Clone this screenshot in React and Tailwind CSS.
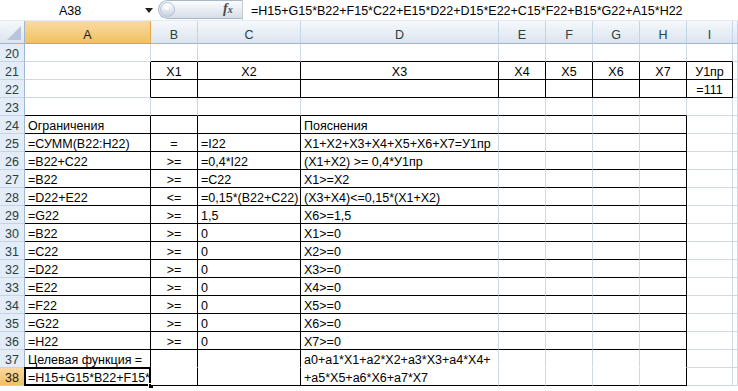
import React from "react";

const COLS = ["A", "B", "C", "D", "E", "F", "G", "H", "I", "J"];

const data = {
  21: { B: "X1", C: "X2", D: "X3", E: "X4", F: "X5", G: "X6", H: "X7", I: "У1пр" },
  22: { I: "=111" },
  24: { A: "Ограничения", D: "Пояснения" },
  25: { A: "=СУММ(B22:H22)", B: "=", C: "=I22", D: "X1+X2+X3+X4+X5+X6+X7=У1пр" },
  26: { A: "=B22+C22", B: ">=", C: "=0,4*I22", D: "(X1+X2) >= 0,4*У1пр" },
  27: { A: "=B22", B: ">=", C: "=C22", D: "X1>=X2" },
  28: { A: "=D22+E22", B: "<=", C: "=0,15*(B22+C22)", D: "(X3+X4)<=0,15*(X1+X2)" },
  29: { A: "=G22", B: ">=", C: "1,5", D: "X6>=1,5" },
  30: { A: "=B22", B: ">=", C: "0", D: "X1>=0" },
  31: { A: "=C22", B: ">=", C: "0", D: "X2>=0" },
  32: { A: "=D22", B: ">=", C: "0", D: "X3>=0" },
  33: { A: "=E22", B: ">=", C: "0", D: "X4>=0" },
  34: { A: "=F22", B: ">=", C: "0", D: "X5>=0" },
  35: { A: "=G22", B: ">=", C: "0", D: "X6>=0" },
  36: { A: "=H22", B: ">=", C: "0", D: "X7>=0" },
  37: { A: "Целевая функция =", D: "a0+a1*X1+a2*X2+a3*X3+a4*X4+" },
  38: { A: "=H15+G15*B22+F15*", D: "+a5*X5+a6*X6+a7*X7" },
};

const FORMULA = "=H15+G15*B22+F15*C22+E15*D22+D15*E22+C15*F22+B15*G22+A15*H22";

function idx(c) {
  return COLS.indexOf(c);
}

function blackRight(r, c) {
  const i = idx(c);
  if (r === 21 || r === 22) return i >= 0 && i <= 8;
  if (r >= 24 && r <= 38) return c === "A" || c === "B" || c === "C" || c === "H";
  return false;
}

function blackBottom(r, c) {
  const i = idx(c);
  if (r >= 20 && r <= 22) return i >= 1 && i <= 8;
  if (r >= 23 && r <= 36) return i >= 0 && i <= 7;
  if (r === 37) return c === "A";
  if (r === 38) return i >= 0 && i <= 7;
  return false;
}

function noBottom(r, c) {
  const i = idx(c);
  return r === 37 && i >= 1 && i <= 7;
}

function isCentered(r, c) {
  if (r === 21 || r === 22) return true;
  if (r >= 25 && c === "B") return true;
  return false;
}

function Cell({ r, c }) {
  const text = (data[r] && data[r][c]) || "";
  const br = blackRight(r, c) ? "border-r-black" : "border-r-[#d0d7e5]";
  const bb = noBottom(r, c)
    ? "border-b-white"
    : blackBottom(r, c)
    ? "border-b-black"
    : "border-b-[#d0d7e5]";
  const align = isCentered(r, c) ? "justify-center" : "justify-start pl-[3px]";
  const selected = r === 38 && c === "A";
  return (
    <div
      className={`relative h-[18px] border-r border-b ${br} ${bb} bg-white flex items-start ${align} pt-[3px] overflow-visible`}
    >
      <span className="leading-[14px] whitespace-nowrap">{text}</span>
      {selected && (
        <>
          <div className="absolute left-[-1px] top-[-1px] right-[-1px] bottom-[-1px] border-2 border-black pointer-events-none" />
          <div className="absolute right-[-4px] bottom-[-4px] w-[6px] h-[6px] bg-black border border-white pointer-events-none" />
        </>
      )}
    </div>
  );
}

function RowHeader({ r }) {
  const sel = r === 38;
  return (
    <div
      className={`h-[18px] border-r border-b border-r-[#9eb6ce] border-b-[#c5d3e6] flex justify-center items-start pt-[3px] ${
        sel ? "bg-gradient-to-b from-[#f9d99f] to-[#f1c15f] text-[#1a1a1a]" : "bg-[#e4ecf7] text-[#27413e]"
      }`}
    >
      <span className="leading-[14px]">{r}</span>
    </div>
  );
}

function ColHeader({ c }) {
  const sel = c === "A";
  return (
    <div
      className={`h-[23px] border-r border-b flex justify-center items-start pt-[7px] ${
        sel
          ? "bg-gradient-to-b from-[#f9dba3] to-[#f1c15f] border-r-[#e2a84f] border-b-[#f29536] text-[#1a1a1a]"
          : "bg-gradient-to-b from-[#f6f9fc] to-[#dbe4f0] border-r-[#c5d3e6] border-b-[#9eb6ce] text-[#27413e]"
      }`}
    >
      <span className="leading-[14px]">{c === "J" ? "" : c}</span>
    </div>
  );
}

export default function App() {
  const rows = [];
  for (let r = 20; r <= 38; r++) rows.push(r);
  return (
    <div className="w-[738px] h-[391px] overflow-hidden bg-white font-['Liberation_Sans',Arial,sans-serif] text-[12.5px] text-black">
      {/* Formula bar */}
      <div className="h-[20px] flex items-stretch bg-white">
        <div className="w-[140px] flex justify-center items-start pt-[4px]">
          <span className="leading-[14px]">A38</span>
        </div>
        <div className="w-[18px] flex items-center justify-center">
          <svg width="8" height="5" viewBox="0 0 8 5">
            <polygon points="0,0 8,0 4,5" fill="#222" />
          </svg>
        </div>
        <div className="w-[84px] h-[20px] relative flex items-center">
          <div className="absolute left-0 top-0 h-[19px] w-[84px] rounded-l-full bg-gradient-to-b from-[#fbfcfe] to-[#d6dee9] border border-[#a9b7c9] border-r-0" />
          <div className="absolute left-[2px] top-[2px] w-[15px] h-[15px] rounded-full bg-gradient-to-b from-[#ffffff] to-[#c9d3e0] border border-[#b5c2d3]" />
          <div className="absolute left-[6px] top-[5px] w-[5px] h-[5px] rounded-full bg-white" />
          <span className="absolute left-[65px] top-[1px] font-['Liberation_Serif',serif] italic font-bold text-[14px] leading-[16px] text-[#4a4a4a]">
            f<span className="text-[10px]">x</span>
          </span>
        </div>
        <div className="flex-1 border-l border-[#c4ccd8] pl-[8px] flex items-start pt-[4px] overflow-hidden">
          <span className="leading-[14px] whitespace-nowrap">{FORMULA}</span>
        </div>
      </div>
      <div className="h-[1px] bg-[#e6ebf2]" />
      {/* Sheet grid */}
      <div className="grid grid-cols-[25px_126px_47px_103px_198px_47px_47px_47px_47px_46px_1fr]">
        <div className="h-[23px] border-r border-b border-r-[#9eb6ce] border-b-[#9eb6ce] bg-gradient-to-b from-[#f6f9fc] to-[#dbe4f0] relative">
          <svg className="absolute right-[3px] bottom-[3px]" width="14" height="14" viewBox="0 0 14 14">
            <polygon points="14,0 14,14 0,14" fill="#b7c6da" />
          </svg>
        </div>
        {COLS.map((c) => (
          <ColHeader key={c} c={c} />
        ))}
        {rows.map((r) => (
          <React.Fragment key={r}>
            <RowHeader r={r} />
            {COLS.map((c) => (
              <Cell key={c} r={r} c={c} />
            ))}
          </React.Fragment>
        ))}
      </div>
    </div>
  );
}
